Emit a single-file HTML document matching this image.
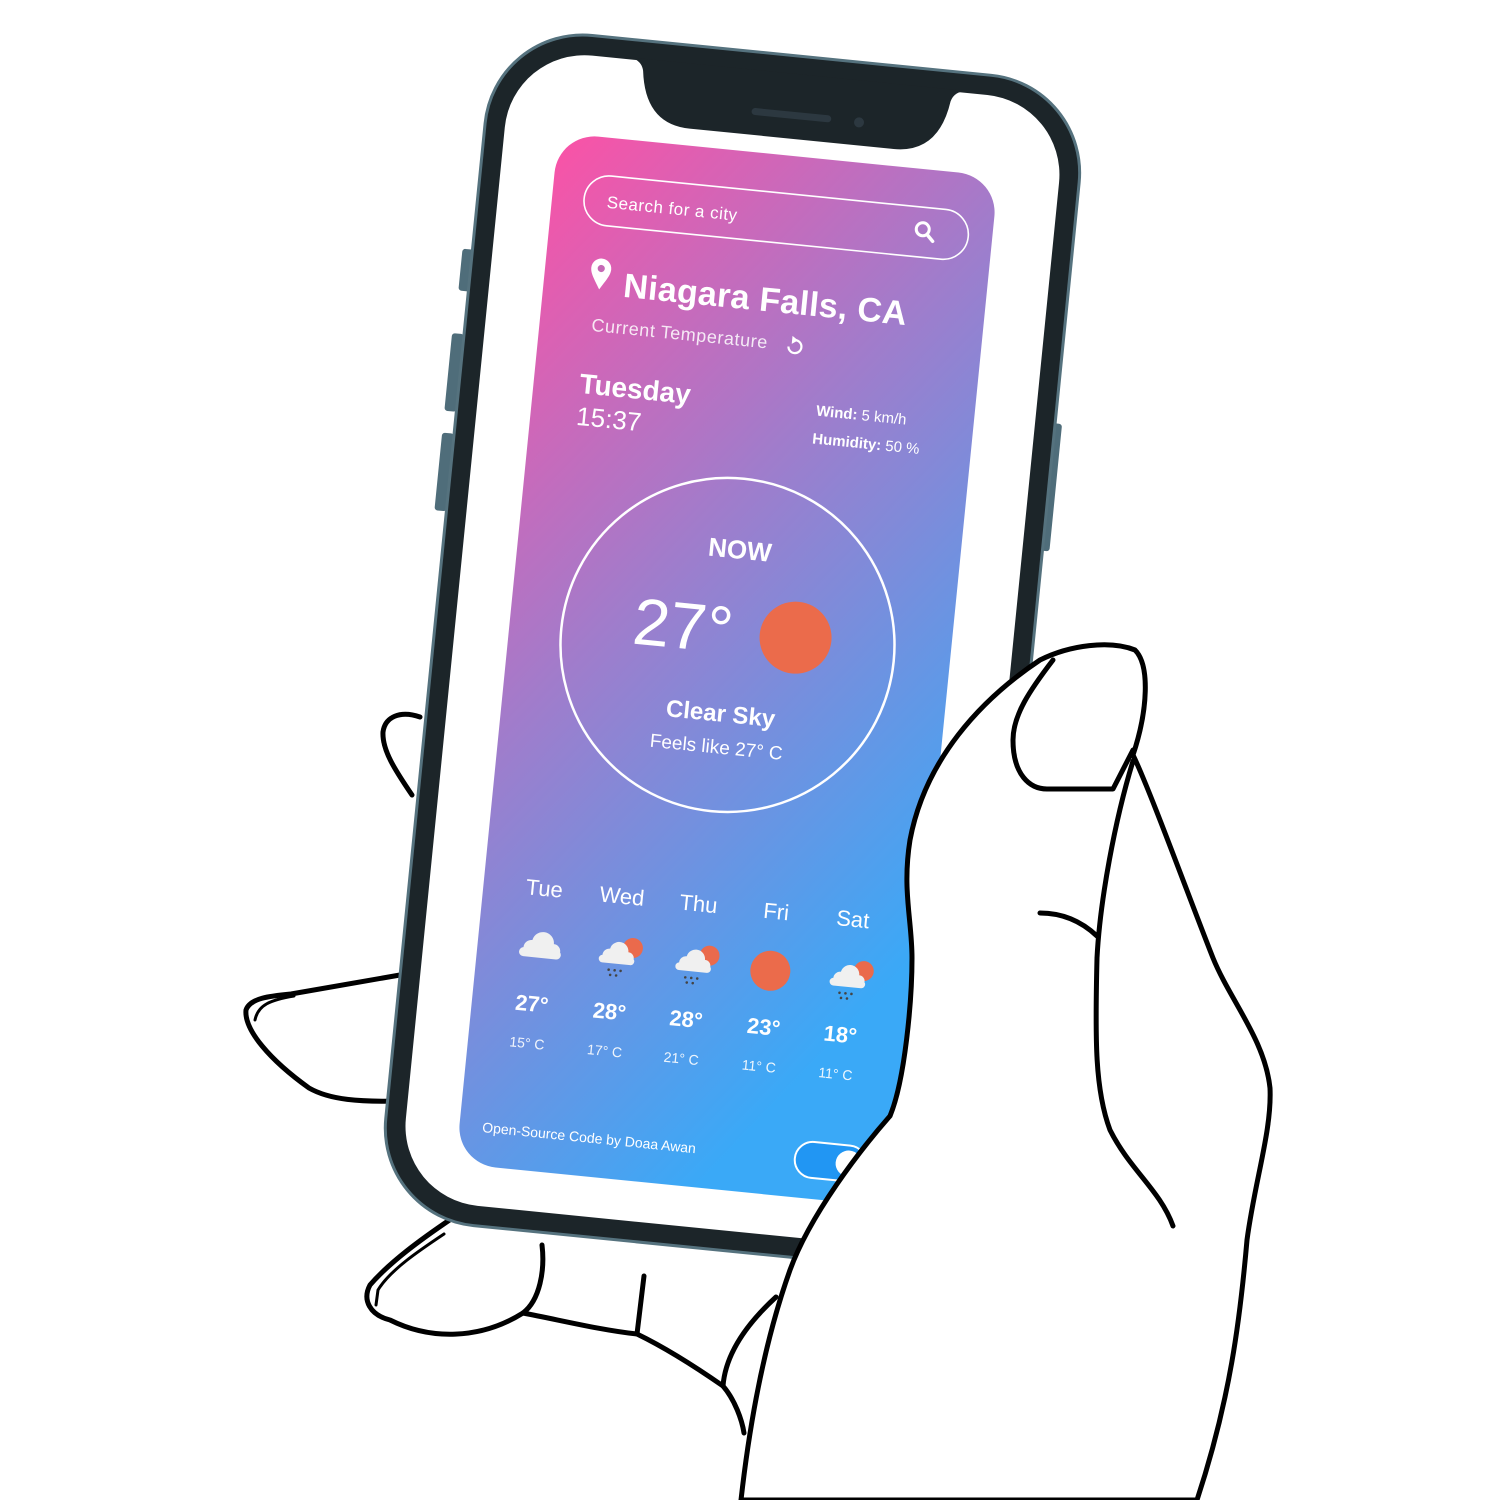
<!DOCTYPE html>
<html><head><meta charset="utf-8"><style>
html,body{margin:0;padding:0;background:#fff;}
svg{display:block;}
text{font-family:"Liberation Sans",sans-serif;fill:#fff;}
</style></head><body>
<svg width="1500" height="1500" viewBox="0 0 1500 1500" xmlns="http://www.w3.org/2000/svg">
<defs>
<linearGradient id="g" x1="0" y1="0" x2="0.55" y2="1">
<stop offset="0" stop-color="#fb52a6"/>
<stop offset="0.45" stop-color="#a17ccb"/>
<stop offset="1" stop-color="#3aa9f7"/>
</linearGradient>
<g id="cloud"><circle cx="-8" cy="2" r="8" fill="#f0f0f0"/><circle cx="3" cy="-4" r="11" fill="#f0f0f0"/><circle cx="14" cy="3" r="7" fill="#f0f0f0"/><rect x="-20" y="2" width="42" height="9" rx="4.5" fill="#f0f0f0"/></g>
<g id="rain"><circle cx="16" cy="-8" r="10" fill="#ea6a4c"/><use href="#cloud" transform="scale(0.85)"/><g fill="#444"><circle cx="-6" cy="16" r="1.3"/><circle cx="0" cy="16" r="1.3"/><circle cx="6" cy="16" r="1.3"/><circle cx="-4" cy="21" r="1.3"/><circle cx="2" cy="21" r="1.3"/></g></g>
</defs>
<rect width="1500" height="1500" fill="#fff"/>

<g fill="#fff" stroke="#000" stroke-width="5" stroke-linecap="round" stroke-linejoin="round">
<path d="M420,717 C400,710 385,717 383,732 C382,750 395,770 412,795"/>
<path d="M400,975 L291,994 C270,996 250,998 246,1010 C244,1030 270,1060 309,1088 C330,1100 360,1102 400,1101"/>
<path d="M294,996 C270,1000 258,1005 255,1020" fill="none" stroke-width="3"/>
<path d="M470,1210 L451,1219 C420,1240 390,1262 370,1285 C362,1300 370,1315 390,1320 C430,1340 480,1340 523,1313 C540,1300 545,1270 542,1245"/>
<path d="M444,1234 C420,1250 390,1270 378,1290 L376,1305" fill="none" stroke-width="3"/>
<path d="M523,1313 C560,1320 600,1330 637,1334 C670,1350 700,1370 723,1386 C735,1400 742,1420 744,1433" fill="none"/>
<path d="M644,1276 L637,1334" fill="none"/>
<path d="M723,1386 C725,1360 740,1330 776,1297" fill="none"/>
</g>

<g transform="translate(506,152) rotate(5.7 221 518)">
<rect x="-84" y="125" width="12" height="42" rx="3" fill="#4f6d7a"/>
<rect x="-86" y="210" width="12" height="78" rx="3" fill="#4f6d7a"/>
<rect x="-86" y="310" width="12" height="78" rx="3" fill="#4f6d7a"/>
<rect x="518" y="240" width="12" height="128" rx="3" fill="#4f6d7a"/>
<rect x="-74" y="-100" width="597" height="1196" rx="98" fill="#1c2529" stroke="#55727e" stroke-width="3"/>
<rect x="-54" y="-80" width="557" height="1156" rx="80" fill="#fff"/>
<path d="M60,-82 Q75,-82 78,-70 Q85,-17 130,-17 L335,-17 Q380,-17 387,-70 Q390,-82 405,-82 Z" fill="#1c2529"/>
<rect x="190" y="-44" width="80" height="7" rx="3.5" fill="#2c3840"/>
<circle cx="298" cy="-40" r="5" fill="#2c3840"/>
<rect x="0" y="0" width="442" height="1036" rx="40" fill="url(#g)"/>
<rect x="32" y="38" width="386" height="50" rx="25" fill="none" stroke="#fff" stroke-width="1.6"/>
<text x="55" y="70" font-size="17" letter-spacing="0.5">Search for a city</text>
<circle cx="372" cy="60" r="6.5" fill="none" stroke="#fff" stroke-width="3"/>
<line x1="377" y1="65" x2="383" y2="71" stroke="#fff" stroke-width="3.5" stroke-linecap="round"/>
<path d="M56,152 C50,142 46,137 46,131 A10,10 0 0 1 66,131 C66,137 62,142 56,152 Z" fill="#fff"/>
<circle cx="56" cy="131" r="3.6" fill="#c569b5"/>
<text x="80" y="157" font-size="34" font-weight="bold" letter-spacing="0.3">Niagara Falls, CA</text>
<text x="52" y="194" font-size="18" letter-spacing="0.6" style="opacity:.85">Current Temperature</text>
<path d="M250,190 A6.5,6.5 0 1 0 256,183" fill="none" stroke="#fff" stroke-width="2.2"/>
<path d="M253,179 L259,183 L253,187 Z" fill="#fff"/>
<text x="46" y="257" font-size="28" font-weight="bold">Tuesday</text>
<text x="46" y="289" font-size="26">15:37</text>
<text x="284" y="256" font-size="15"><tspan font-weight="bold">Wind:</tspan> 5 km/h</text>
<text x="283" y="284" font-size="15"><tspan font-weight="bold">Humidity:</tspan> 50 %</text>
<circle cx="219" cy="493" r="167" fill="none" stroke="#fff" stroke-width="2.5"/>
<text x="222" y="406" font-size="26" font-weight="bold" text-anchor="middle">NOW</text>
<text x="173" y="501" font-size="66" text-anchor="middle">27°</text>
<circle cx="286" cy="479" r="36" fill="#eb6b4b"/>
<text x="219" y="570" font-size="24" font-weight="bold" text-anchor="middle">Clear Sky</text>
<text x="218" y="602" font-size="19" text-anchor="middle">Feels like 27° C</text>
<g font-size="22" text-anchor="middle">
<text x="61" y="761">Tue</text><text x="139" y="761">Wed</text><text x="216" y="761">Thu</text><text x="294" y="761">Fri</text><text x="371" y="761">Sat</text>
</g>
<use href="#cloud" x="62" y="812"/>
<use href="#rain" x="139" y="812"/>
<use href="#rain" x="216" y="812"/>
<circle cx="294" cy="813" r="20" fill="#eb6b4b"/>
<use href="#rain" x="371" y="812"/>
<g font-size="22" font-weight="bold" text-anchor="middle">
<text x="60" y="877">27°</text><text x="138" y="877">28°</text><text x="215" y="877">28°</text><text x="293" y="877">23°</text><text x="370" y="877">18°</text>
</g>
<g font-size="14" text-anchor="middle" style="opacity:.9">
<text x="59" y="914">15° C</text><text x="137" y="914">17° C</text><text x="214" y="914">21° C</text><text x="292" y="914">11° C</text><text x="369" y="914">11° C</text>
</g>
<text x="23" y="1002" font-size="14">Open-Source Code by Doaa Awan</text>
<rect x="337" y="979" width="72" height="36" rx="18" fill="#2196f3" stroke="#fff" stroke-width="2"/>
<circle cx="391" cy="997" r="13" fill="#fff"/>
</g>

<g stroke="#000" stroke-width="5" stroke-linecap="round" stroke-linejoin="round">
<path d="M741,1500 C750,1420 765,1340 790,1270 C810,1215 860,1150 890,1116 C905,1080 912,1000 912,958 C912,920 902,890 910,840 C925,760 980,700 1040,660 C1070,645 1110,640 1135,650 C1150,665 1148,710 1133,755 C1150,790 1190,900 1213,958 C1230,1000 1265,1040 1270,1088 C1272,1130 1255,1180 1247,1240 C1240,1320 1230,1400 1197,1500 Z" fill="#fff"/>
<path d="M1053,660 C1030,690 1013,715 1013,740 C1013,775 1030,789 1047,789 L1113,789 L1133,750" fill="none"/>
<path d="M1133,761 C1115,820 1100,900 1097,958 C1095,1040 1095,1090 1110,1130 C1130,1170 1160,1190 1173,1226" fill="none"/>
<path d="M1040,913 C1060,913 1080,920 1097,936" fill="none"/>
</g>
</svg>
</body></html>
